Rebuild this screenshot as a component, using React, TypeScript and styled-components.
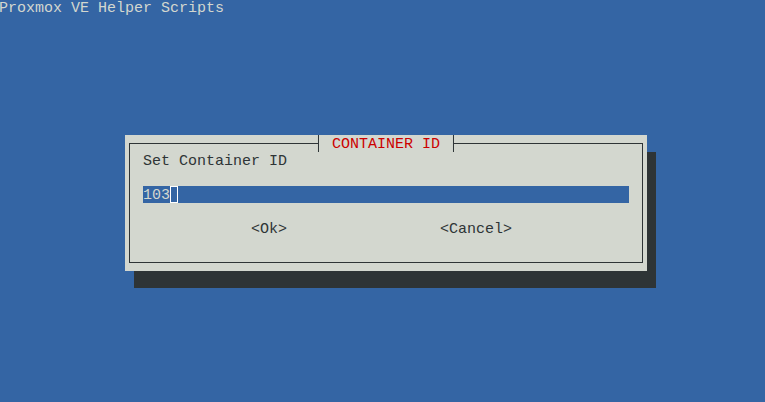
import React from "react";
import styled, { createGlobalStyle } from "styled-components";

const Global = createGlobalStyle`
  html, body {
    margin: 0;
    padding: 0;
    background: #3465a4;
    width: 765px;
    height: 402px;
    overflow: hidden;
  }
  * { box-sizing: border-box; }
`;

const Screen = styled.div`
  width: 765px;
  height: 402px;
  background: #3465a4;
  font-family: "Liberation Mono", "DejaVu Sans Mono", monospace;
  font-size: 15px;
  line-height: 20px;
  display: flex;
  flex-direction: column;
  margin-top: -1px;
  margin-left: -1px;
`;

const BackTitle = styled.div`
  height: 17px;
  color: #d3d7cf;
  white-space: pre;
`;

const Dialog = styled.div`
  margin-top: 119px;
  margin-left: 126px;
  width: 522px;
  height: 136px;
  background: #d3d7cf;
  box-shadow: 9px 17px 0 #2e3436;
  padding: 8px 4px;
`;

const Frame = styled.div`
  position: relative;
  height: 120px;
  border: 1px solid #2e3436;
  padding: 8px 0 0 13px;
  display: flex;
  flex-direction: column;
`;

const Title = styled.div`
  position: absolute;
  top: -9px;
  left: 50%;
  transform: translateX(-50%);
  height: 17px;
  padding: 0 4px;
  background: #d3d7cf;
  border-left: 1px solid #2e3436;
  border-right: 1px solid #2e3436;
  color: #cc0000;
  white-space: pre;
  line-height: 19px;
`;

const Label = styled.div`
  height: 17px;
  color: #2e3436;
  white-space: pre;
`;

const Input = styled.div`
  margin-top: 17px;
  width: 486px;
  height: 17px;
  background: #3465a4;
  color: #d3d7cf;
  display: flex;
  align-items: flex-start;
  white-space: pre;
`;

const Cursor = styled.span`
  width: 8px;
  height: 17px;
  border: 1px solid #ffffff;
`;

const ButtonRow = styled.div`
  margin-top: 17px;
  height: 17px;
  display: flex;
  gap: 153px;
  padding-left: 108px;
`;

const Button = styled.span`
  color: #2e3436;
  white-space: pre;
`;

export default function App() {
  return (
    <>
      <Global />
      <Screen>
        <BackTitle>Proxmox VE Helper Scripts</BackTitle>
        <Dialog>
          <Frame>
            <Title> CONTAINER ID </Title>
            <Label>Set Container ID</Label>
            <Input>
              <span>103</span>
              <Cursor />
            </Input>
            <ButtonRow>
              <Button>&lt;Ok&gt;</Button>
              <Button>&lt;Cancel&gt;</Button>
            </ButtonRow>
          </Frame>
        </Dialog>
      </Screen>
    </>
  );
}
